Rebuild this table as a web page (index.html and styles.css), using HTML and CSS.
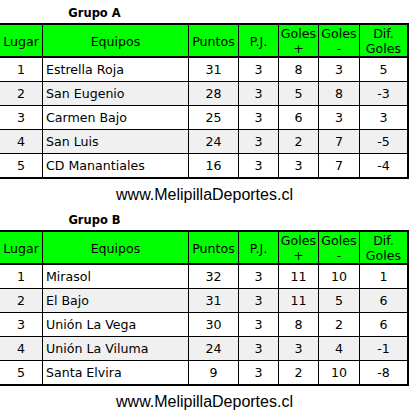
FILE: index.html
```html
<!DOCTYPE html>
<html lang="es">
<head>
<meta charset="utf-8">
<title>Grupos</title>
<link rel="stylesheet" href="styles.css">
</head>
<body>
<section class="group">
  <div class="title">Grupo A</div>
  <table class="standings">
    <colgroup>
      <col class="c-pos"><col class="c-team"><col class="c-pts"><col class="c-pj"><col class="c-gf"><col class="c-gc"><col class="c-dif">
    </colgroup>
    <thead>
      <tr><th>Lugar</th><th>Equipos</th><th>Puntos</th><th>P.J.</th><th>Goles<br>+</th><th>Goles<br>-</th><th>Dif.<br>Goles</th></tr>
    </thead>
    <tbody>
      <tr><td>1</td><td class="team">Estrella Roja</td><td>31</td><td>3</td><td>8</td><td>3</td><td>5</td></tr>
      <tr><td>2</td><td class="team">San Eugenio</td><td>28</td><td>3</td><td>5</td><td>8</td><td>-3</td></tr>
      <tr><td>3</td><td class="team">Carmen Bajo</td><td>25</td><td>3</td><td>6</td><td>3</td><td>3</td></tr>
      <tr><td>4</td><td class="team">San Luis</td><td>24</td><td>3</td><td>2</td><td>7</td><td>-5</td></tr>
      <tr><td>5</td><td class="team">CD Manantiales</td><td>16</td><td>3</td><td>3</td><td>7</td><td>-4</td></tr>
    </tbody>
  </table>
  <div class="site">www.MelipillaDeportes.cl</div>
</section>
<section class="group">
  <div class="title">Grupo B</div>
  <table class="standings">
    <colgroup>
      <col class="c-pos"><col class="c-team"><col class="c-pts"><col class="c-pj"><col class="c-gf"><col class="c-gc"><col class="c-dif">
    </colgroup>
    <thead>
      <tr><th>Lugar</th><th>Equipos</th><th>Puntos</th><th>P.J.</th><th>Goles<br>+</th><th>Goles<br>-</th><th>Dif.<br>Goles</th></tr>
    </thead>
    <tbody>
      <tr><td>1</td><td class="team">Mirasol</td><td>32</td><td>3</td><td>11</td><td>10</td><td>1</td></tr>
      <tr><td>2</td><td class="team">El Bajo</td><td>31</td><td>3</td><td>11</td><td>5</td><td>6</td></tr>
      <tr><td>3</td><td class="team">Unión La Vega</td><td>30</td><td>3</td><td>8</td><td>2</td><td>6</td></tr>
      <tr><td>4</td><td class="team">Unión La Viluma</td><td>24</td><td>3</td><td>3</td><td>4</td><td>-1</td></tr>
      <tr><td>5</td><td class="team">Santa Elvira</td><td>9</td><td>3</td><td>2</td><td>10</td><td>-8</td></tr>
    </tbody>
  </table>
  <div class="site">www.MelipillaDeportes.cl</div>
</section>
</body>
</html>
```
FILE: styles.css
```css
html, body {
  margin: 0;
  padding: 0;
  background: #ffffff;
}
body {
  width: 409px;
  font-family: "DejaVu Sans", Verdana, sans-serif;
  color: #000000;
}
.group {
  display: flex;
  flex-direction: column;
}
.title {
  width: 189px;
  height: 23px;
  box-sizing: border-box;
  padding-top: 3px;
  line-height: 20px;
  text-align: center;
  font-weight: bold;
  font-size: 11.5px;
}
.standings {
  width: 409px;
  table-layout: fixed;
  border-collapse: separate;
  border-spacing: 0;
  font-size: 12.6px;
}
.c-pos { width: 43px; }
.c-team { width: 146px; }
.c-pts { width: 50px; }
.c-pj { width: 40px; }
.c-gf { width: 40px; }
.c-gc { width: 41px; }
.c-dif { width: 49px; }
.standings th,
.standings td {
  box-sizing: border-box;
  padding: 0;
  text-align: center;
  border-right: 1px solid #000;
  border-bottom: 1px solid #000;
  font-weight: normal;
}
.standings th:last-child,
.standings td:last-child {
  border-right: 2px solid #000;
}
.standings th {
  background: #00ff00;
  height: 34px;
  line-height: 15px;
  border-top: 2px solid #000;
  border-bottom: 2px solid #000;
  padding-top: 1px;
}
.standings td {
  height: 24px;
  line-height: 22px;
}
.standings tbody tr:nth-child(even) td {
  background: #f0f0f0;
}
.standings tbody tr:last-child td {
  height: 25px;
  border-bottom: 2px solid #000;
}
.standings td.team {
  text-align: left;
  padding-left: 3px;
}
.site {
  height: 28px;
  box-sizing: border-box;
  padding-top: 6px;
  text-align: center;
  font-family: "Liberation Sans", Arial, sans-serif;
  font-size: 16px;
  line-height: 20px;
}
```
